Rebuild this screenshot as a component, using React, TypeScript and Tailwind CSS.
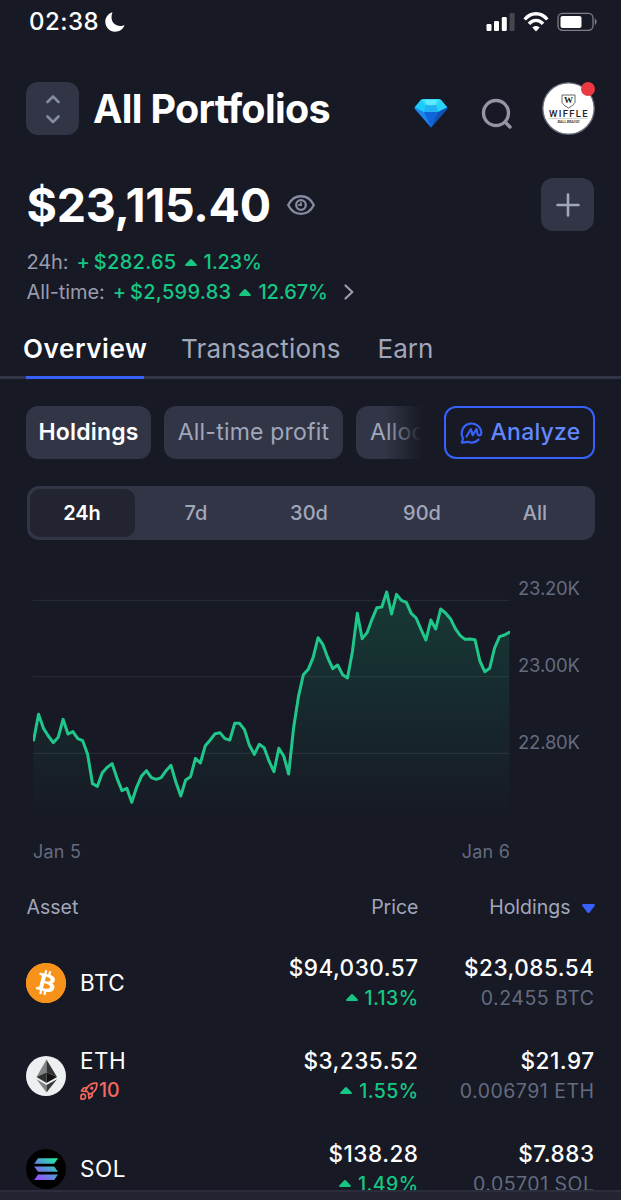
import type { ReactNode } from 'react';
import { SiBitcoin } from 'react-icons/si';

interface Asset {
  symbol: string;
  icon: ReactNode;
  trending?: number;
  price: string;
  change: string;
  value: string;
  amount: string;
}

const CHART_STEP = 14.71;
const CHART_VALUES = [
  510, 433, 475, 498, 518, 502, 448, 492, 485, 506, 512, 553, 641, 649, 608, 592, 581, 625, 662, 655,
  697, 652, 618, 602, 623, 628, 623, 602, 586, 636, 678, 630, 620, 565, 579, 527, 510, 491, 488, 506,
  510, 460, 460, 479, 526, 553, 523, 533, 573, 605, 535, 558, 612, 475, 380, 314, 298, 262, 203, 224,
  264, 296, 285, 314, 324, 245, 130, 206, 188, 148, 113, 111, 66, 132, 73, 91, 97, 130, 144, 178,
  210, 150, 177, 117, 129, 146, 176, 197, 208, 207, 209, 273, 305, 295, 234, 200, 195, 187,
];

const PERIODS = ['24h', '7d', '30d', '90d', 'All'];

function UpTriangle() {
  return (
    <svg viewBox="0 0 12 7" className="h-[7px] w-3 shrink-0" fill="#16c784">
      <path d="M5 .6a1.4 1.4 0 0 1 2 0l4.5 4.6c.8.8.4 1.8-.6 1.8H1.1C.1 7-.3 6 .5 5.2z" />
    </svg>
  );
}

function StatusBar() {
  return (
    <div className="flex h-[42px] items-center justify-between pt-px pr-6 pl-[29px]">
      <div className="flex items-center gap-1.5">
        <span className="text-[24px] font-medium tracking-[0.5px] text-white">02:38</span>
        <svg viewBox="0 0 20 20" className="h-5 w-5" fill="white">
          <path d="M7.500.3C3.500 1.500.3 5 .3 9.800c0 5.500 4.300 9.900 9.700 9.900 4.500 0 8.200-2.500 9.600-6.700-1.400.7-2.600 1-4.200 1-5.200 0-8.900-3.700-8.900-8.700 0-1.800.3-3.400 1-5z" />
        </svg>
      </div>
      <div className="flex items-center gap-2">
        <svg viewBox="0 0 29 18" className="h-[18px] w-[29px]" fill="white">
          <rect x="0.5" y="11" width="5" height="7" rx="1.3" />
          <rect x="8" y="8" width="5" height="10" rx="1.3" />
          <rect x="15.8" y="4" width="5" height="14" rx="1.3" />
          <rect x="23.6" y="0" width="5" height="18" rx="1.3" opacity=".2" />
        </svg>
        <svg viewBox="0 0 26 20" className="h-5 w-[26px]" fill="none" stroke="white" strokeWidth="3.4">
          <path d="M1.7 7.5C8-.2 18-.2 24.3 7.5" />
          <path d="M6 11.8c4-4.6 10-4.6 14 0" />
          <path d="M13 19.5l-3.7-4c2-2 5.4-2 7.4 0z" fill="white" stroke="none" />
        </svg>
        <svg viewBox="0 0 40 20" className="h-5 w-10" fill="none">
          <rect x="1" y="1.3" width="35" height="17" rx="4.5" stroke="#7d7e88" strokeWidth="1.3" />
          <rect x="3.5" y="3.9" width="21" height="12" rx="2" fill="white" />
          <path d="M37.8 6.5c2.4.8 2.4 5.7 0 6.5z" fill="#7d7e88" />
        </svg>
      </div>
    </div>
  );
}

function Diamond() {
  return (
    <svg viewBox="0 0 34 30" className="mt-2 h-[30px] w-[34px]">
      <path d="M7 2Q8 1 10 1h14q2 0 3 1l6 7q.8 1 0 2L17 29.5.8 11q-.8-1 0-2z" fill="#1a86ee" />
      <path d="M7 2Q8 1 10 1h14q2 0 3 1l6 7.3-9 .2-3-3h-8l-3 3-9-.2z" fill="#35d9fb" />
      <path d="M10.5 2h13L21 7.500h-8z" fill="#5eeafd" />
      <path d="M12 8h10l2 6H10z" fill="#1fb3f6" />
      <path d="M12 8L7 2 1 9.500l9 4.500z" fill="#19cdfa" />
      <path d="M22 8l5-6 6 7.500-9 4.500z" fill="#2bd2f8" />
      <path d="M10 14h14L17 29.500z" fill="#1265d8" />
      <path d="M24 14l9-4.500q.8.8 0 1.700L17 29.500z" fill="#0d52b8" />
    </svg>
  );
}

function Avatar() {
  return (
    <div className="relative h-[53px] w-[53px]">
      <svg viewBox="0 0 53 53" className="h-full w-full">
        <circle cx="26.5" cy="26.5" r="25.7" fill="white" stroke="#6b6d7b" strokeWidth="1.3" />
        <path d="M20 13h13v7.500q-2 3.500-6.500 5.500Q22 24 20 20.500z" fill="none" stroke="#444" strokeWidth=".8" />
        <text x="26.5" y="20.7" textAnchor="middle" fontSize="9" fontWeight="700" fontFamily="Liberation Serif, serif" fill="#222">W</text>
        <text x="27" y="34.5" textAnchor="middle" letterSpacing="1.3" fontSize="9.5" fontWeight="500" fontFamily="Roboto, sans-serif" fill="#222">WIFFLE</text>
        <path d="M7 36.500h39" stroke="#aaa" strokeWidth=".5" />
        <text x="26.5" y="41" textAnchor="middle" textLength="22" fontSize="4" fontWeight="700" fontStyle="italic" fontFamily="Lato, sans-serif" fill="#444">BALL BRAND</text>
      </svg>
      <span className="absolute top-0 right-0 h-[14px] w-[14px] rounded-full bg-[#ea3943]" />
    </div>
  );
}

function Header() {
  return (
    <div className="mt-10 flex h-[53px] items-center pr-[26px] pl-[26px]">
      <button className="flex h-[53px] w-[53px] items-center justify-center rounded-xl bg-[#323546]">
        <svg viewBox="0 0 14 30" className="h-[30px] w-[14px]" fill="none" stroke="#858ca2" strokeWidth="2.6" strokeLinecap="round" strokeLinejoin="round">
          <path d="M1.500 8L7 2.500 12.500 8M1.500 22.500L7 28l5.500-5.500" />
        </svg>
      </button>
      <h1 className="mt-0.5 ml-3.5 text-[39.5px] font-bold tracking-[-0.7px] text-white">All Portfolios</h1>
      <div className="ml-auto flex items-center">
        <Diamond />
        <svg viewBox="0 0 32 32" className="mt-2.5 ml-[33px] h-8 w-8" fill="none" stroke="#9394a6" strokeWidth="3.4" strokeLinecap="round">
          <circle cx="15" cy="15" r="12.5" />
          <path d="M24.500 24.500l4.500 4.500" />
        </svg>
        <div className="ml-[29px]">
          <Avatar />
        </div>
      </div>
    </div>
  );
}

function Balance() {
  return (
    <div className="pr-[27px] pl-[26.5px]">
      <div className="mt-[43px] flex h-[53px] items-center">
        <span className="mt-0.5 text-[46.5px] font-bold tracking-[-0.3px] text-white">$23,115.40</span>
        <svg viewBox="0 0 28 20" className="ml-4 h-5 w-7" fill="none" stroke="#858ca2" strokeWidth="2.3">
          <path d="M1.200 10C7-1.700 21-1.700 26.800 10 21 21.700 7 21.700 1.200 10z" strokeLinejoin="round" />
          <circle cx="14" cy="10" r="4.8" />
          <path d="M14 7.300v2.700h-2.700" strokeWidth="1.8" />
        </svg>
        <button className="ml-auto flex h-[53px] w-[53px] items-center justify-center rounded-xl bg-[#323546]">
          <svg viewBox="0 0 24 24" className="h-6 w-6" stroke="#a1a7bb" strokeWidth="2.6" strokeLinecap="round">
            <path d="M12 1.500v21M1.500 12h21" />
          </svg>
        </button>
      </div>
      <div className="mt-4 flex h-[30px] items-center text-[20px] tracking-[0.3px]">
        <span className="tracking-[-0.1px] text-[#9a9cae]">24h:</span>
        <span className="ml-2 font-medium text-[#16c784] [word-spacing:-2px]">+ $282.65</span>
        <span className="mr-[7px] ml-2"><UpTriangle /></span>
        <span className="font-medium tracking-[-0.2px] text-[#16c784]">1.23%</span>
      </div>
      <div className="flex h-[30px] items-center text-[20px] tracking-[0.3px]">
        <span className="tracking-[-0.1px] text-[#9a9cae]">All-time:</span>
        <span className="ml-2 font-medium text-[#16c784] [word-spacing:-2px]">+ $2,599.83</span>
        <span className="mr-[7px] ml-2"><UpTriangle /></span>
        <span className="font-medium tracking-[-0.1px] text-[#16c784]">12.67%</span>
        <svg viewBox="0 0 10 16" className="ml-4 h-4 w-2.5" fill="none" stroke="#9a9cae" strokeWidth="2.2" strokeLinecap="round" strokeLinejoin="round">
          <path d="M1.500 1.500L8.300 8l-6.800 6.500" />
        </svg>
      </div>
    </div>
  );
}

function Tabs() {
  return (
    <div className="mt-[22px] flex h-[50px] items-start border-b-[3px] border-[#323546] pl-[23px] text-[26px] leading-10 tracking-[0.15px] text-[#a1a7bb]">
      <div className="relative h-[50px] w-[124px] font-semibold tracking-[0.6px] text-white">
        Overview
        <span className="absolute bottom-0 left-[3px] h-[3px] w-[118px] bg-[#3861fb]" />
      </div>
      <div className="ml-[34px]">Transactions</div>
      <div className="ml-[37px] tracking-normal">Earn</div>
    </div>
  );
}

function AnalyzeIcon() {
  return (
    <svg viewBox="0 0 24 24" className="h-6 w-6" fill="none" stroke="#3861fb" strokeWidth="2.2" strokeLinecap="round" strokeLinejoin="round">
      <path d="M19.500 18.600A9.800 9.800 0 0 1 9 20.800L2.800 21.600 4 17.200A9.800 9.800 0 1 1 22.300 12c0 2.800-3.600 3.200-3.900.5L17.500 8l-3.800 6.200L11.800 8.200 7.500 15.500" />
    </svg>
  );
}

function Filters() {
  return (
    <div className="mt-[27px] flex h-[53px] items-center px-[26px] text-[23px] tracking-[0.2px] text-[#a1a7bb]">
      <div className="relative flex w-[400px] gap-[13px] overflow-hidden">
        <div className="flex h-[53px] w-[125px] shrink-0 items-center justify-center rounded-xl bg-[#323546] font-semibold text-white">Holdings</div>
        <div className="flex h-[53px] w-[179px] shrink-0 items-center justify-center rounded-xl bg-[#323546]">All-time profit</div>
        <div className="flex h-[53px] flex-1 items-center rounded-l-xl bg-[#323546] pl-3.5">Alloc</div>
        <div className="absolute inset-y-0 right-0 w-10 bg-linear-to-r from-transparent to-[#171924] to-90%" />
      </div>
      <button className="ml-auto flex h-[53px] w-[151px] items-center justify-center gap-2 rounded-xl border-2 border-[#3861fb] font-medium text-[#6188ff]">
        <AnalyzeIcon />
        Analyze
      </button>
    </div>
  );
}

function PeriodSwitch() {
  return (
    <div className="mx-[26.5px] mt-[27px] flex h-[54px] rounded-xl bg-[#323546] p-[3px] text-[20px] font-medium text-[#a1a7bb]">
      {PERIODS.map((period, i) => (
        <div
          key={period}
          className={`flex items-center justify-center ${i === 0 ? 'mr-[5px] w-[105px] rounded-[10px] bg-[#222531] font-semibold text-white' : 'flex-1'}`}
        >
          {period}
        </div>
      ))}
    </div>
  );
}

function Chart() {
  const line = CHART_VALUES.map((y, i) => `${i === 0 ? 'M' : 'L'}${(41 + i * CHART_STEP).toFixed(1)} ${y}`).join('');

  return (
    <div className="mt-[30px] px-[33px] text-[#646b80]">
      <div className="flex h-[260px]">
        <svg viewBox="39 0 1431 780" className="h-[260px] w-[477px] shrink-0">
          <defs>
            <linearGradient id="area" x1="0" y1="60" x2="0" y2="750" gradientUnits="userSpaceOnUse">
              <stop offset="0" stopColor="#16c784" stopOpacity=".19" />
              <stop offset="1" stopColor="#16c784" stopOpacity="0" />
            </linearGradient>
          </defs>
          <path d="M39 91H1468M39 320H1468M39 550H1468" stroke="#2b2e3b" strokeWidth="3" />
          <path d={`${line}V750H41Z`} fill="url(#area)" />
          <path d={line} fill="none" stroke="#20c78a" strokeWidth="9" strokeLinejoin="round" strokeLinecap="round" />
        </svg>
        <div className="ml-2 flex flex-col gap-[47px] pt-[3px] text-[18.5px] leading-[30px] tracking-[-0.2px]">
          <span>23.20K</span>
          <span>23.00K</span>
          <span>22.80K</span>
        </div>
      </div>
      <div className="mt-2 flex w-[477px] justify-between text-[18px] leading-7 tracking-[0.2px]">
        <span>Jan 5</span>
        <span>Jan 6</span>
      </div>
    </div>
  );
}

function EthIcon() {
  return (
    <svg viewBox="0 0 40 40" className="h-10 w-10">
      <circle cx="20" cy="20" r="20" fill="#ecf0f1" />
      <path d="M20.500 3.500v12.800L10.500 21z" fill="#828384" />
      <path d="M20.500 3.500L31 21l-10.500-4.700z" fill="#343434" />
      <path d="M20.500 16.300V27L10.500 21z" fill="#2f3030" />
      <path d="M20.500 16.300L31 21l-10.500 6z" fill="#131313" />
      <path d="M10.500 23.200l10 5.900v7.400z" fill="#828384" />
      <path d="M31 23.200l-10.500 5.900v7.400z" fill="#393939" />
    </svg>
  );
}

function SolIcon() {
  return (
    <svg viewBox="0 0 40 40" className="h-10 w-10">
      <defs>
        <linearGradient id="sol" x1="31" y1="8" x2="11" y2="32" gradientUnits="userSpaceOnUse">
          <stop offset="0" stopColor="#19fb9b" />
          <stop offset=".5" stopColor="#5497d5" />
          <stop offset="1" stopColor="#9945ff" />
        </linearGradient>
      </defs>
      <circle cx="20" cy="20" r="20" fill="black" />
      <path d="M12 9.300h20l-3.800 5.400H8.200zM8.200 17.400h20l3.800 5.400H12zM12 25.600h20l-3.800 5.400H8.200z" fill="url(#sol)" />
    </svg>
  );
}

const ASSETS: Asset[] = [
  {
    symbol: 'BTC',
    icon: (
      <div className="flex h-10 w-10 items-center justify-center rounded-full bg-[#f7931a]">
        <span className="flex h-[30px] w-[30px] items-center justify-center rounded-full bg-white">
          <SiBitcoin className="h-10 w-10 shrink-0 text-[#f7931a]" />
        </span>
      </div>
    ),
    price: '$94,030.57',
    change: '1.13%',
    value: '$23,085.54',
    amount: '0.2455 BTC',
  },
  { symbol: 'ETH', icon: <EthIcon />, trending: 10, price: '$3,235.52', change: '1.55%', value: '$21.97', amount: '0.006791 ETH' },
  { symbol: 'SOL', icon: <SolIcon />, price: '$138.28', change: '1.49%', value: '$7.883', amount: '0.05701 SOL' },
];

function RocketIcon() {
  return (
    <svg viewBox="0 0 18 18" className="h-[18px] w-[18px]" fill="none" stroke="#f6685e" strokeWidth="1.7" strokeLinecap="round" strokeLinejoin="round">
      <path d="M16.800 1.200c-4.500-.3-7.300 1-9.500 4.300L5.600 8.200l4.200 4.200 2.700-1.700c3.300-2.200 4.600-5 4.300-9.500z" />
      <path d="M7 5.700L3.700 6 1.500 9l4 .5M12.300 11l-.3 3.300-3 2.200-.5-4M1 17v-2.500c0-3 4.500-3.300 4.500 0S3.500 17 1 17z" />
      <circle cx="11.8" cy="6.2" r=".8" />
    </svg>
  );
}

function AssetRow({ asset }: { asset: Asset }) {
  return (
    <div className="flex h-[93px] items-center pr-[26.5px] pl-[26px] text-[22.5px] text-white">
      {asset.icon}
      <div className="ml-3.5 flex flex-col tracking-[0.5px]">
        <span className="leading-[30px]">{asset.symbol}</span>
        {asset.trending && (
          <span className="flex items-center gap-px text-[19.5px] leading-[29px] font-medium tracking-normal text-[#f6685e]">
            <RocketIcon />
            {asset.trending}
          </span>
        )}
      </div>
      <div className="ml-auto flex flex-col items-end">
        <span className="leading-[30px] font-medium tracking-[0.5px]">{asset.price}</span>
        <span className="flex items-center gap-[7px] text-[19.5px] leading-[30px] font-medium tracking-[0.4px] text-[#16c784]">
          <UpTriangle />
          {asset.change}
        </span>
      </div>
      <div className="flex w-[176px] flex-col items-end">
        <span className="leading-[30px] font-medium tracking-[0.5px]">{asset.value}</span>
        <span className="text-[19.5px] leading-[30px] tracking-[0.5px] text-[#646b80]">{asset.amount}</span>
      </div>
    </div>
  );
}

export default function App() {
  return (
    <div className="relative h-[1200px] w-[621px] overflow-hidden bg-[#171924] font-['Inter',sans-serif] whitespace-nowrap">
      <StatusBar />
      <Header />
      <Balance />
      <Tabs />
      <Filters />
      <PeriodSwitch />
      <Chart />
      <div className="mt-[27px] flex h-[30px] items-center px-[26.5px] text-[19.5px] text-[#a1a7bb]">
        <span>Asset</span>
        <span className="ml-auto">Price</span>
        <span className="flex w-[176px] items-center justify-end gap-[11px]">
          Holdings
          <svg viewBox="0 0 13 9" className="h-[9px] w-[13px]" fill="#3861fb">
            <path d="M1.500 0h10c1.300 0 1.800 1.300.9 2.300L7.800 8.200a1.600 1.600 0 0 1-2.600 0L.6 2.300C-.3 1.300.2 0 1.500 0z" />
          </svg>
        </span>
      </div>
      <div className="mt-[13px]">
        {ASSETS.map((asset) => (
          <AssetRow key={asset.symbol} asset={asset} />
        ))}
      </div>
      <div className="absolute inset-x-0 bottom-0 h-2.5 border-t-2 border-[#2b2d3c] bg-[#222431]" />
    </div>
  );
}
